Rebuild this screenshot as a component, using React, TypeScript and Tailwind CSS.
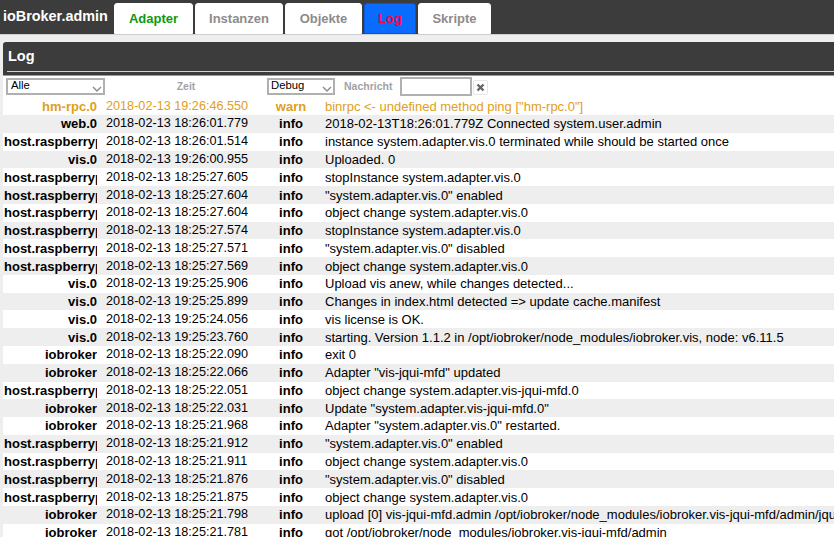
const rows: [string, string, string, string][] = [
  ["hm-rpc.0", "19:26:46.550", "warn", 'binrpc <- undefined method ping ["hm-rpc.0"]'],
  ["web.0", "18:26:01.779", "info", "2018-02-13T18:26:01.779Z Connected system.user.admin"],
  ["host.raspberrypi", "18:26:01.514", "info", "instance system.adapter.vis.0 terminated while should be started once"],
  ["vis.0", "19:26:00.955", "info", "Uploaded. 0"],
  ["host.raspberrypi", "18:25:27.605", "info", "stopInstance system.adapter.vis.0"],
  ["host.raspberrypi", "18:25:27.604", "info", '"system.adapter.vis.0" enabled'],
  ["host.raspberrypi", "18:25:27.604", "info", "object change system.adapter.vis.0"],
  ["host.raspberrypi", "18:25:27.574", "info", "stopInstance system.adapter.vis.0"],
  ["host.raspberrypi", "18:25:27.571", "info", '"system.adapter.vis.0" disabled'],
  ["host.raspberrypi", "18:25:27.569", "info", "object change system.adapter.vis.0"],
  ["vis.0", "19:25:25.906", "info", "Upload vis anew, while changes detected..."],
  ["vis.0", "19:25:25.899", "info", "Changes in index.html detected => update cache.manifest"],
  ["vis.0", "19:25:24.056", "info", "vis license is OK."],
  ["vis.0", "19:25:23.760", "info", "starting. Version 1.1.2 in /opt/iobroker/node_modules/iobroker.vis, node: v6.11.5"],
  ["iobroker", "18:25:22.090", "info", "exit 0"],
  ["iobroker", "18:25:22.066", "info", 'Adapter "vis-jqui-mfd" updated'],
  ["host.raspberrypi", "18:25:22.051", "info", "object change system.adapter.vis-jqui-mfd.0"],
  ["iobroker", "18:25:22.031", "info", 'Update "system.adapter.vis-jqui-mfd.0"'],
  ["iobroker", "18:25:21.968", "info", 'Adapter "system.adapter.vis.0" restarted.'],
  ["host.raspberrypi", "18:25:21.912", "info", '"system.adapter.vis.0" enabled'],
  ["host.raspberrypi", "18:25:21.911", "info", "object change system.adapter.vis.0"],
  ["host.raspberrypi", "18:25:21.876", "info", '"system.adapter.vis.0" disabled'],
  ["host.raspberrypi", "18:25:21.875", "info", "object change system.adapter.vis.0"],
  ["iobroker", "18:25:21.798", "info", "upload [0] vis-jqui-mfd.admin /opt/iobroker/node_modules/iobroker.vis-jqui-mfd/admin/jqui-mfd.png"],
  ["iobroker", "18:25:21.781", "info", "got /opt/iobroker/node_modules/iobroker.vis-jqui-mfd/admin"],
];

const tabs = [
  { label: "Adapter", cls: "w-[79px] bg-white text-[#0b9a0b] border-white" },
  { label: "Instanzen", cls: "w-[88px] bg-white text-[#8c8c8c] border-white" },
  { label: "Objekte", cls: "w-[77px] bg-white text-[#8c8c8c] border-white" },
  { label: "Log", cls: "w-[52px] bg-[#0a6cff] text-[#ff0033] border-[#0a55d8]" },
  { label: "Skripte", cls: "w-[73px] bg-white text-[#8c8c8c] border-white" },
];

function Chevron() {
  return (
    <svg width="10" height="6" viewBox="0 0 10 6" className="absolute right-[1px] top-[6px]">
      <path d="M1 1l4 4 4-4" fill="none" stroke="#8a8a8a" strokeWidth="1.4" />
    </svg>
  );
}

export default function App() {
  return (
    <div className="h-[537px] w-[834px] overflow-hidden bg-[#eeeeee] font-['Liberation_Sans',Arial,sans-serif] text-[13px] text-black">
      <div className="flex h-[35px] items-end border-b border-[#cfcfcf] bg-[#3c3c3c]">
        <div className="flex h-full w-[114px] items-center pl-[3px] text-[14.4px] font-bold text-white">ioBroker.admin</div>
        <div className="flex gap-[2px]">
          {tabs.map((t) => (
            <div
              key={t.label}
              className={`flex h-[31px] items-center justify-center rounded-t-[3px] border text-[13px] font-bold ${t.cls}`}
            >
              {t.label}
            </div>
          ))}
        </div>
      </div>
      <div className="ml-[3px] mt-[7px]">
        <div className="h-[33px] rounded-tl-[3px] bg-[#3c3c3c] pl-[4px]">
          <div className="flex h-[30px] items-center border-b border-[#d4d4d4] pl-[1px] pt-[1px] text-[14.5px] font-bold text-white">Log</div>
        </div>
        <div className="h-[1px] bg-[#9a9a9a]" />
        <div className="bg-white">
          <div className="flex h-[21.3px] items-start text-[10.5px]">
            <div className="relative ml-[3px] mt-[2px] h-[17px] w-[99px] border-2 border-[#b0b0b0] pl-[3px] text-[11.3px] leading-[11px]">
              Alle
              <Chevron />
            </div>
            <div className="mt-[4px] w-[162px] text-center font-bold leading-[13px] text-[#a3a3a3]">Zeit</div>
            <div className="relative mt-[2px] h-[17px] w-[68px] border-2 border-[#b0b0b0] pl-[2px] text-[11.3px] leading-[11px]">
              Debug
              <Chevron />
            </div>
            <div className="ml-[9px] mt-[4px] w-[56px] font-bold leading-[13px] text-[#a3a3a3]">Nachricht</div>
            <div className="mt-[1px] h-[19px] w-[72px] border-2 border-[#b0b0b0]" />
            <div className="ml-[1px] mt-[4px] flex h-[15px] w-[15px] items-center justify-center rounded-[2px] border border-[#e6e6e6]">
              <svg width="9" height="9" viewBox="0 0 9 9">
                <path d="M1.5 1.5l6 6M7.5 1.5l-6 6" stroke="#666666" strokeWidth="2.4" />
              </svg>
            </div>
          </div>
          {rows.map((r, i) => {
            const warn = r[2] === "warn";
            return (
              <div
                key={i}
                className={`flex h-[17.77px] items-center whitespace-nowrap leading-[15px] ${i % 2 ? "bg-[#eeeeee]" : "bg-white"} ${warn ? "text-[#e0a019]" : "text-black"}`}
              >
                <div className={`w-[94px] shrink-0 overflow-hidden font-bold ${r[0].startsWith("host") ? "pl-[1px] text-left" : "text-right"}`}>
                  {r[0]}
                </div>
                <div className="w-[163px] shrink-0 pl-[9px] text-[12.67px]">2018-02-13 {r[1]}</div>
                <div className="w-[62px] shrink-0 text-center font-bold">{r[2]}</div>
                <div className="shrink-0 pl-[3px]">{r[3]}</div>
              </div>
            );
          })}
        </div>
      </div>
    </div>
  );
}
